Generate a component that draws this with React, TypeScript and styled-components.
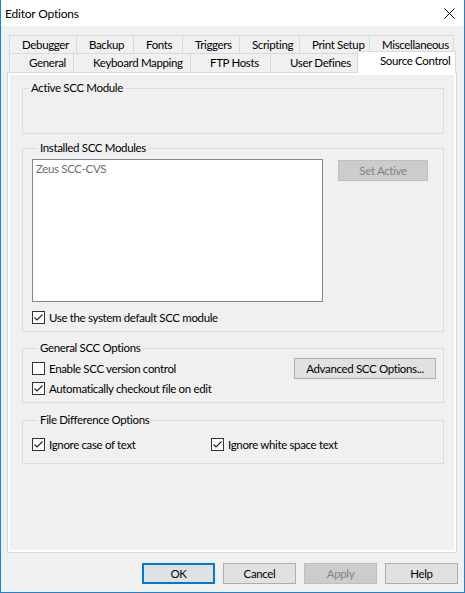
import styled, { createGlobalStyle } from "styled-components";

const GlobalStyle = createGlobalStyle`
  html, body {
    margin: 0;
    padding: 0;
    background: #f0f0f0;
  }
  body {
    font-family: Lato, "Liberation Sans", sans-serif;
    font-size: 11.5px;
    letter-spacing: -0.35px;
    color: #000;
  }
  * {
    box-sizing: border-box;
  }
`;

const Window = styled.div`
  width: 465px;
  height: 593px;
  display: flex;
  flex-direction: column;
  border: 1px solid #1883d7;
  border-top: none;
  background: #f0f0f0;
`;

const TitleBar = styled.div`
  flex: none;
  height: 26px;
  background: #fff;
  display: flex;
  align-items: center;
  justify-content: space-between;
  padding-left: 4px;
`;

const Title = styled.span`
  font-size: 12px;
  letter-spacing: -0.2px;
`;

const CloseButton = styled.div`
  width: 30px;
  height: 26px;
  display: flex;
  align-items: center;
  justify-content: center;
`;

const Body = styled.div`
  flex: 1;
  display: flex;
  flex-direction: column;
  padding: 9px 7px 8px 6px;
`;

const TabStrip = styled.div`
  display: flex;
  flex-direction: column;
  margin-left: 2px;
`;

const TabRow = styled.div<{ $h: number }>`
  display: flex;
  align-items: flex-start;
  height: ${({ $h }) => $h}px;
`;

const Tab = styled.div<{ $w: number; $pad: number; $lh: number; $last?: boolean }>`
  width: ${({ $w, $last }) => ($last ? $w + 1 : $w)}px;
  flex: none;
  height: 100%;
  border: 1px solid #d9d9d9;
  border-bottom: none;
  border-right: ${({ $last }) => ($last ? "1px solid #d9d9d9" : "none")};
  background: #f0f0f0;
  padding-left: ${({ $pad }) => $pad}px;
  line-height: ${({ $lh }) => $lh}px;
  white-space: nowrap;
  overflow: hidden;
`;

const ActiveTab = styled.div<{ $w: number }>`
  position: relative;
  z-index: 1;
  flex: none;
  width: ${({ $w }) => $w}px;
  height: 22px;
  margin: -2px -2px 0 -2px;
  border: 1px solid #d9d9d9;
  border-bottom: none;
  background: #fff;
  padding-left: 22px;
  line-height: 17px;
  white-space: nowrap;
`;

const Panel = styled.div`
  flex: 1;
  display: flex;
  border: 1px solid #d9d9d9;
  background: #fff;
  padding: 2px;
`;

const Page = styled.div`
  flex: 1;
  display: flex;
  flex-direction: column;
  background: #f0f0f0;
  padding: 6px 10px 0 12px;
`;

const Group = styled.fieldset<{ $mt: number; $pad: string }>`
  margin: ${({ $mt }) => $mt}px 0 0 0;
  min-width: 0;
  border: 1px solid #dcdcdc;
  padding: ${({ $pad }) => $pad};
`;

const Legend = styled.legend`
  margin-left: 6px;
  padding: 0 2px;
  line-height: 14px;
`;

const EmptyArea = styled.div`
  height: 38px;
`;

const ListRow = styled.div`
  display: flex;
  align-items: flex-start;
  gap: 15px;
`;

const ListBox = styled.div`
  width: 291px;
  height: 143px;
  background: #fff;
  border: 1px solid #828790;
  padding: 2px 3px;
  line-height: 14px;
  color: #6d6d6d;
`;

const Button = styled.div<{ $w: number; $disabled?: boolean; $default?: boolean; $mt?: number }>`
  width: ${({ $w }) => $w}px;
  height: 21px;
  flex: none;
  margin-top: ${({ $mt }) => $mt ?? 0}px;
  display: flex;
  align-items: center;
  justify-content: center;
  background: ${({ $disabled }) => ($disabled ? "#cccccc" : "#e1e1e1")};
  border: ${({ $default, $disabled }) =>
    $default ? "2px solid #0078d7" : $disabled ? "1px solid #bfbfbf" : "1px solid #adadad"};
  color: ${({ $disabled }) => ($disabled ? "#838383" : "#000")};
  white-space: nowrap;
`;

const CheckRow = styled.div<{ $mt?: number; $w?: number }>`
  display: flex;
  align-items: center;
  height: 13px;
  margin-top: ${({ $mt }) => $mt ?? 0}px;
  width: ${({ $w }) => ($w ? `${$w}px` : "auto")};
  flex: none;
  white-space: nowrap;
`;

const Box = styled.span`
  width: 13px;
  height: 13px;
  flex: none;
  border: 1px solid #333;
  background: #fff;
  display: flex;
  margin-right: 4px;
`;

const OptionsRow = styled.div`
  display: flex;
  justify-content: space-between;
  align-items: flex-start;
`;

const CheckColumn = styled.div`
  display: flex;
  flex-direction: column;
  padding-top: 4px;
`;

const DiffRow = styled.div`
  display: flex;
`;

const ButtonBar = styled.div`
  display: flex;
  justify-content: flex-end;
  gap: 8px;
  margin-top: 10px;
  margin-right: -1px;
`;

type CheckProps = { label: string; checked?: boolean; mt?: number; w?: number };

const Check = ({ label, checked, mt, w }: CheckProps) => (
  <CheckRow $mt={mt} $w={w}>
    <Box>
      {checked && (
        <svg width="11" height="11" viewBox="0 0 11 11">
          <path d="M1.5 5.5 L4 8 L9.5 2.5" fill="none" stroke="#222" strokeWidth="1.1" />
        </svg>
      )}
    </Box>
    {label}
  </CheckRow>
);

const row1 = [
  { label: "Debugger", w: 67 },
  { label: "Backup", w: 57 },
  { label: "Fonts", w: 49 },
  { label: "Triggers", w: 57 },
  { label: "Scripting", w: 60 },
  { label: "Print Setup", w: 70 },
  { label: "Miscellaneous", w: 84 },
];

const row2 = [
  { label: "General", w: 64 },
  { label: "Keyboard Mapping", w: 117 },
  { label: "FTP Hosts", w: 80 },
  { label: "User Defines", w: 89 },
];

export default function App() {
  return (
    <>
      <GlobalStyle />
      <Window>
        <TitleBar>
          <Title>Editor Options</Title>
          <CloseButton>
            <svg width="11" height="11" viewBox="0 0 11 11">
              <path d="M0.5 0.5 L10.5 10.5 M10.5 0.5 L0.5 10.5" stroke="#000" strokeWidth="1" />
            </svg>
          </CloseButton>
        </TitleBar>
        <Body>
          <TabStrip>
            <TabRow $h={18}>
              {row1.map((t, i) => (
                <Tab key={t.label} $w={t.w} $pad={12} $lh={17} $last={i === row1.length - 1}>
                  {t.label}
                </Tab>
              ))}
            </TabRow>
            <TabRow $h={19}>
              {row2.map((t) => (
                <Tab key={t.label} $w={t.w} $pad={19} $lh={18}>
                  {t.label}
                </Tab>
              ))}
              <ActiveTab $w={99}>Source Control</ActiveTab>
            </TabRow>
          </TabStrip>
          <Panel>
            <Page>
              <Group $mt={0} $pad="0">
                <Legend>Active SCC Module</Legend>
                <EmptyArea />
              </Group>
              <Group $mt={7} $pad="4px 9px 7px 9px">
                <Legend>Installed SCC Modules</Legend>
                <ListRow>
                  <ListBox>Zeus SCC-CVS</ListBox>
                  <Button $w={90} $disabled $mt={1}>
                    Set Active
                  </Button>
                </ListRow>
                <Check label="Use the system default SCC module" checked mt={9} />
              </Group>
              <Group $mt={9} $pad="3px 7px 7px 9px">
                <Legend>General SCC Options</Legend>
                <OptionsRow>
                  <CheckColumn>
                    <Check label="Enable SCC version control" />
                    <Check label="Automatically checkout file on edit" checked mt={7} />
                  </CheckColumn>
                  <Button $w={142}>Advanced SCC Options...</Button>
                </OptionsRow>
              </Group>
              <Group $mt={10} $pad="11px 9px 12px 9px">
                <Legend>File Difference Options</Legend>
                <DiffRow>
                  <Check label="Ignore case of text" checked w={179} />
                  <Check label="Ignore white space text" checked />
                </DiffRow>
              </Group>
            </Page>
          </Panel>
          <ButtonBar>
            <Button $w={73} $default>OK</Button>
            <Button $w={73}>Cancel</Button>
            <Button $w={73} $disabled>Apply</Button>
            <Button $w={73}>Help</Button>
          </ButtonBar>
        </Body>
      </Window>
    </>
  );
}
